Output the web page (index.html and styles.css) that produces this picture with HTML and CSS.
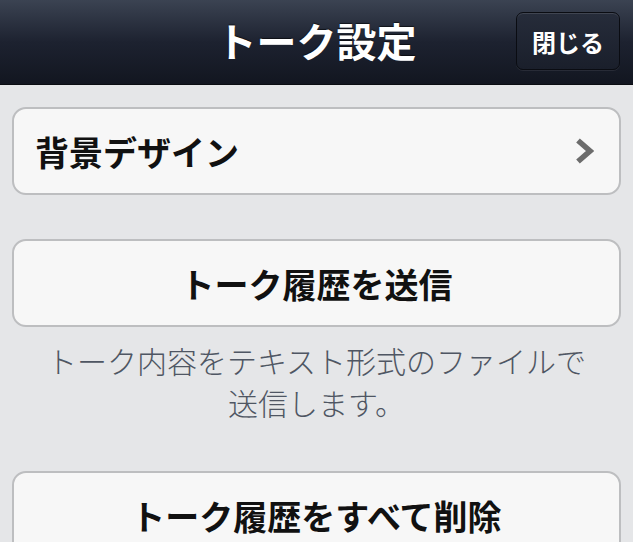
FILE: index.html
```html
<!DOCTYPE html>
<html lang="ja">
<head>
  <meta charset="UTF-8">
  <title>トーク設定</title>
  <link rel="stylesheet" href="styles.css">
</head>
<body>

  <div class="header">
    <h1>トーク設定</h1>
    <button type="button" class="close">閉じる</button>
  </div>

  <div class="content">
    <div class="card row">
      <span>背景デザイン</span>
      <svg class="chevron" width="18" height="26" viewBox="0 0 18 26">
        <path d="M2 2.5 L14 13 L2 23.5" fill="none" stroke="#6c6c6c" stroke-width="5.5"/>
      </svg>
    </div>

    <div class="card center send">トーク履歴を送信</div>
    <p class="note">トーク内容をテキスト形式のファイルで<br>送信します。</p>

    <div class="card center delete">トーク履歴をすべて削除</div>
  </div>

</body>
</html>
```

FILE: styles.css
```css
body {
  margin: 0;
  background: #e5e6e8;
  font-family: "Noto Sans CJK JP", "Noto Sans", sans-serif;
  overflow: hidden;
}
.header {
  position: relative;
  height: 85px;
  background: linear-gradient(#3b4352, #1d2230 50%, #121620);
  border-bottom: 1px solid #0b0d12;
  box-sizing: border-box;
  display: flex;
  align-items: center;
  justify-content: center;
  padding-bottom: 4px;
}
.header h1 {
  margin: 0;
  color: white;
  font-size: 40px;
  font-weight: bold;
  text-shadow: 0 -1px 1px rgba(0, 0, 0, 0.6);
}
.close {
  position: absolute;
  right: 13px;
  top: 12px;
  width: 104px;
  height: 58px;
  border: 1px solid #0a0c12;
  border-radius: 7px;
  background: linear-gradient(#262c3a, #1a1f2b);
  box-shadow: inset 0 1px 0 rgba(255, 255, 255, 0.12), 0 1px 0 rgba(255, 255, 255, 0.08);
  color: white;
  font-family: "Noto Sans CJK JP", sans-serif;
  font-size: 24px;
  font-weight: bold;
  padding: 0;
}
.content {
  padding: 22px 12px 0 12px;
}
.card {
  height: 88px;
  box-sizing: border-box;
  background: #f7f7f7;
  border: 2px solid #bdbec0;
  border-radius: 14px;
  font-size: 34px;
  font-weight: bold;
  color: #111;
  display: flex;
  align-items: center;
}
.row {
  justify-content: space-between;
  padding: 0 25px 0 21px;
}
.center {
  justify-content: center;
}
.send {
  margin-top: 44px;
}
.note {
  margin: 12px 0 0 0;
  text-align: center;
  font-size: 30px;
  line-height: 42px;
  color: #4f5663;
  font-weight: 300;
}
.delete {
  margin-top: 48px;
}
```
